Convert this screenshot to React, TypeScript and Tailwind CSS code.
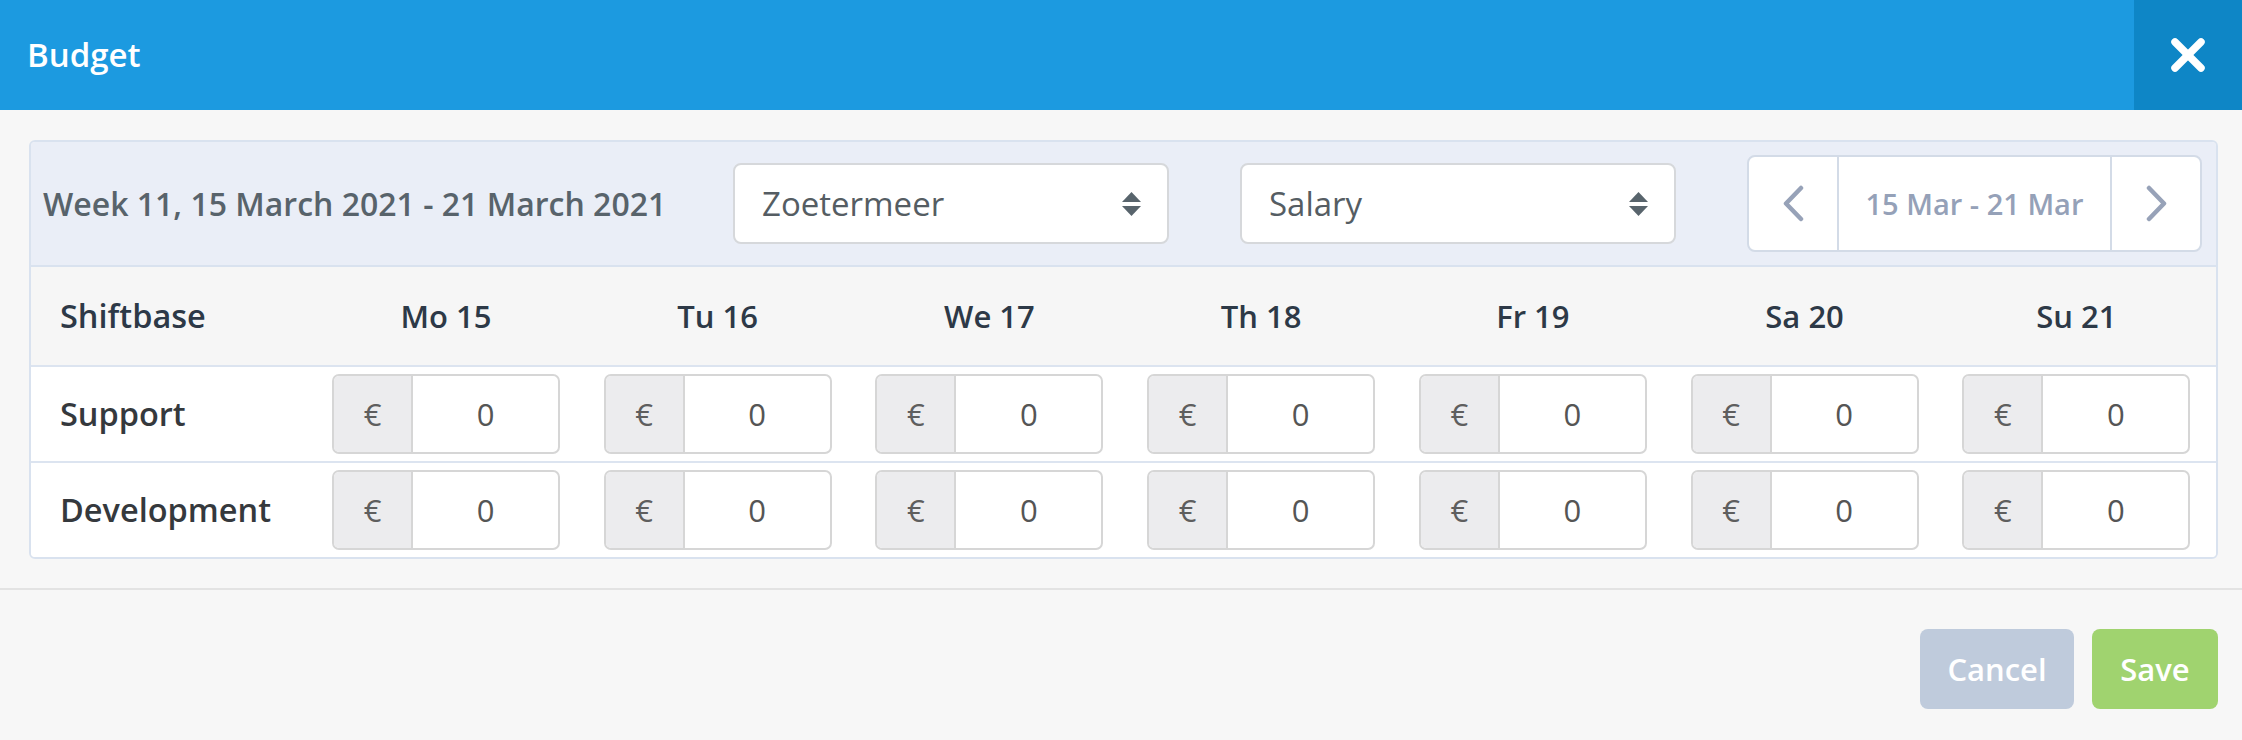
const DAYS = ["Mo 15", "Tu 16", "We 17", "Th 18", "Fr 19", "Sa 20", "Su 21"];
const ROWS = ["Support", "Development"];

function SelectArrows() {
  return (
    <svg width="19" height="24" viewBox="0 0 19 24" fill="#58646c">
      <path d="M0 10 L9.5 0 L19 10 Z" />
      <path d="M0 14 L19 14 L9.5 24 Z" />
    </svg>
  );
}

function Select({ label }: { label: string }) {
  return (
    <div className="flex h-[81px] w-[436px] shrink-0 items-center justify-between rounded-[8px] border-2 border-[#d6d8db] bg-white pl-[27px] pr-[26px]">
      <span className="text-[33px] text-[#555d63]">{label}</span>
      <SelectArrows />
    </div>
  );
}

function Chevron({ dir }: { dir: "left" | "right" }) {
  return (
    <svg width="21" height="37" viewBox="0 0 21 37" fill="none" stroke="#97a2b8" strokeWidth="4.5" strokeLinecap="round" strokeLinejoin="round">
      {dir === "left" ? <polyline points="18,3 3,18.5 18,34" /> : <polyline points="3,3 18,18.5 3,34" />}
    </svg>
  );
}

function MoneyInput() {
  return (
    <div className="flex h-[80px] w-[228px] overflow-hidden rounded-[7px] border-2 border-[#d6d6d6] bg-white">
      <div className="flex w-[79px] items-center justify-center border-r-2 border-[#d6d6d6] bg-[#ececee] text-[31px] text-[#5e5e5e]">
        €
      </div>
      <div className="flex flex-1 items-center justify-center text-[31px] text-[#555]">0</div>
    </div>
  );
}

export default function App() {
  return (
    <div className="h-[740px] w-full bg-[#f7f7f7] font-['Open_Sans','Liberation_Sans',sans-serif]">
      {/* header */}
      <div className="flex h-[110px] items-center justify-between bg-[#1c9ae0]">
        <h1 className="pl-[27px] text-[33px] font-semibold text-white">Budget</h1>
        <button className="flex h-full w-[108px] items-center justify-center bg-[#0e86c6]">
          <svg width="34" height="34" viewBox="0 0 34 34" stroke="white" strokeWidth="7.5" strokeLinecap="round">
            <line x1="4" y1="4" x2="30" y2="30" />
            <line x1="30" y1="4" x2="4" y2="30" />
          </svg>
        </button>
      </div>

      {/* body */}
      <div className="pl-[29px] pr-[24px] pt-[30px]">
        <div className="overflow-hidden rounded-[6px] border-2 border-[#d9e2ef]">
          <div className="flex h-[125px] items-center gap-[71px] border-b-2 border-[#d9e2ef] bg-[#eaeef7] pl-[12px] pr-[14px]">
            <div className="min-w-0 flex-1 whitespace-nowrap text-[32px] font-semibold text-[#58636b]">
              Week 11, 15 March 2021 - 21 March 2021
            </div>
            <Select label="Zoetermeer" />
            <Select label="Salary" />
            <div className="flex h-[97px] w-[455px] shrink-0 overflow-hidden rounded-[8px] border-2 border-[#d3dbe7] bg-white">
              <button className="flex w-[90px] items-center justify-center border-r-2 border-[#d3dbe7]">
                <Chevron dir="left" />
              </button>
              <div className="flex flex-1 items-center justify-center text-[29px] font-semibold text-[#95a1b8]">
                15 Mar - 21 Mar
              </div>
              <button className="flex w-[90px] items-center justify-center border-l-2 border-[#d3dbe7]">
                <Chevron dir="right" />
              </button>
            </div>
          </div>

          <div className="grid grid-cols-[283px_repeat(7,minmax(0,1fr))]">
            <div className="flex h-[98px] items-center bg-[#f6f6f6] pl-[29px] text-[32.5px] font-semibold text-[#2d3947]">
              Shiftbase
            </div>
            {DAYS.map((d) => (
              <div key={d} className="flex h-[98px] items-center bg-[#f6f6f6] pl-[18px]">
                <div className="w-[228px] text-center text-[31px] font-semibold text-[#2d3947]">{d}</div>
              </div>
            ))}

            {ROWS.map((r) => (
              <div key={r} className="contents">
                <div className="flex h-[96px] items-center border-t-2 border-[#dce4f0] bg-white pl-[29px] text-[32.5px] font-semibold text-[#35393d]">
                  {r}
                </div>
                {DAYS.map((d) => (
                  <div key={d} className="flex h-[96px] items-center border-t-2 border-[#dce4f0] bg-white pl-[18px]">
                    <MoneyInput />
                  </div>
                ))}
              </div>
            ))}
          </div>
        </div>
      </div>

      {/* footer */}
      <div className="mt-[29px] flex justify-end gap-[18px] border-t-2 border-[#e3e3e3] pr-[24px] pt-[39px]">
        <button className="h-[80px] w-[154px] rounded-[8px] bg-[#bfcbdc] text-[31px] font-semibold text-white">Cancel</button>
        <button className="h-[80px] w-[126px] rounded-[8px] bg-[#a0d36f] text-[31px] font-semibold text-white">Save</button>
      </div>
    </div>
  );
}
